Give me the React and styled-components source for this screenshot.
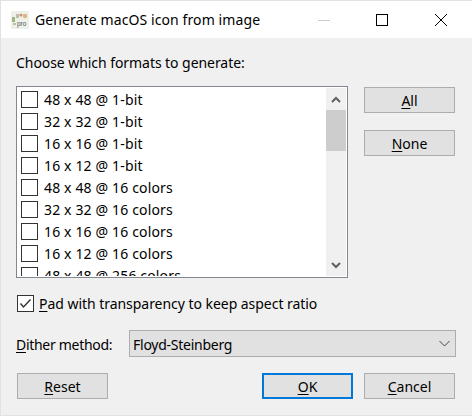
import React from "react";
import styled, { createGlobalStyle } from "styled-components";

const Global = createGlobalStyle`
  html, body { margin: 0; padding: 0; background: #f0f0f0; }
  body { font-family: "Noto Sans", "Open Sans", sans-serif; }
  u { text-underline-offset: 2px; text-decoration-thickness: 1px; }
`;

const Win = styled.div`
  box-sizing: border-box;
  width: 472px;
  height: 416px;
  border: 1px solid #e2e2e2;
  border-right: 0;
  background: #f0f0f0;
  display: flex;
  flex-direction: column;
  color: #000;
  font-size: 14px;
  overflow: hidden;
`;

const TitleBar = styled.div`
  height: 37px;
  background: #fff;
  display: flex;
  align-items: center;
  padding: 0 2px 0 10px;
  gap: 6px;
`;

const TitleText = styled.div`
  flex: 1;
  font-size: 14px;
  letter-spacing: 0.1px;
  white-space: nowrap;
`;

const WinButtons = styled.div`
  display: flex;
`;

const WinBtn = styled.div`
  width: ${(p) => p.$w}px;
  height: 37px;
  display: flex;
  align-items: center;
  justify-content: center;
`;

const Content = styled.div`
  flex: 1;
  display: flex;
  flex-direction: column;
  padding: 14px 16px 0 15px;
`;

const Heading = styled.div`
  box-sizing: border-box;
  height: 20px;
  line-height: 20px;
  margin-bottom: 14px;
  padding-top: 1px;
  letter-spacing: -0.06px;
`;

const ListRow = styled.div`
  display: flex;
  gap: 16px;
  height: 192px;
`;

const ListBox = styled.div`
  box-sizing: border-box;
  width: 332px;
  height: 192px;
  border: 1px solid #828790;
  background: #fff;
  display: flex;
  overflow: hidden;
  padding: 1px;
`;

const Items = styled.div`
  flex: 1;
  height: 188px;
  overflow: hidden;
  padding-left: 3px;
`;

const Item = styled.div`
  height: 22px;
  display: flex;
  align-items: center;
  gap: 6px;
  white-space: nowrap;
  letter-spacing: 0.15px;
`;

const Check = styled.div`
  box-sizing: border-box;
  width: 17px;
  height: 17px;
  border: 1px solid #333;
  background: #fff;
  display: flex;
  align-items: center;
  justify-content: center;
  flex: none;
`;

const Scroll = styled.div`
  width: 20px;
  height: 188px;
  background: #f0f0f0;
  display: flex;
  flex-direction: column;
`;

const Arrow = styled.div`
  height: 22px;
  display: flex;
  align-items: center;
  justify-content: center;
  flex: none;
`;

const Track = styled.div`
  flex: 1;
`;

const Thumb = styled.div`
  height: 41px;
  background: #cdcdcd;
`;

const Side = styled.div`
  display: flex;
  flex-direction: column;
  gap: 17px;
  padding-top: 1px;
`;

const Button = styled.div`
  box-sizing: border-box;
  width: 91px;
  height: 26px;
  display: flex;
  align-items: center;
  justify-content: center;
  background: #e1e1e1;
  border: ${(p) => (p.$primary ? "2px solid #0078d7" : "1px solid #adadad")};
  white-space: nowrap;
`;

const PadRow = styled.div`
  display: flex;
  align-items: center;
  gap: 5px;
  margin: 16px 0 0 1px;
  height: 19px;
  letter-spacing: -0.04px;
`;

const DitherRow = styled.div`
  display: flex;
  align-items: center;
  margin-top: 17px;
  height: 27px;
`;

const DitherLabel = styled.div`
  width: 113px;
  flex: none;
  padding-top: 1px;
  letter-spacing: -0.3px;
`;

const Combo = styled.div`
  box-sizing: border-box;
  width: 327px;
  height: 27px;
  background: #e1e1e1;
  border: 1px solid #adadad;
  display: flex;
  align-items: center;
  justify-content: space-between;
  padding: 0 5px 0 3px;
`;

const ComboText = styled.span`
  padding-top: 1px;
  letter-spacing: -0.25px;
`;

const Footer = styled.div`
  display: flex;
  align-items: center;
  margin: 16px 1px 0 1px;
`;

const FooterRight = styled.div`
  margin-left: auto;
  display: flex;
  gap: 11px;
`;

const labels = [
  "48 x 48 @ 1-bit",
  "32 x 32 @ 1-bit",
  "16 x 16 @ 1-bit",
  "16 x 12 @ 1-bit",
  "48 x 48 @ 16 colors",
  "32 x 32 @ 16 colors",
  "16 x 16 @ 16 colors",
  "16 x 12 @ 16 colors",
  "48 x 48 @ 256 colors",
];

const AppIcon = () => (
  <svg width="18" height="18" viewBox="0 0 18 18">
    <rect x="0" y="0" width="18" height="18" fill="#eef0ea" />
    <rect x="1" y="6" width="3" height="5" fill="#9db884" />
    <rect x="5" y="3" width="3" height="4" fill="#c5bba4" />
    <circle cx="10" cy="4" r="1.6" fill="#c8958a" />
    <circle cx="14" cy="5" r="2.2" fill="#e0b67c" />
    <rect x="2" y="12" width="3" height="2" fill="#b5c6a2" />
    <text x="6" y="15" fontFamily="Liberation Sans, sans-serif" fontSize="6.5" fill="#555">pro</text>
  </svg>
);

export default function App() {
  return (
    <Win>
      <Global />
      <TitleBar>
        <AppIcon />
        <TitleText>Generate macOS icon from image</TitleText>
        <WinButtons>
          <WinBtn $w={56}>
            <svg width="12" height="12" viewBox="0 0 12 12"><path d="M0 6.5H12" stroke="#ccc" strokeWidth="1" /></svg>
          </WinBtn>
          <WinBtn $w={60}>
            <svg width="12" height="12" viewBox="0 0 12 12"><rect x=".5" y=".5" width="11" height="11" fill="none" stroke="#000" /></svg>
          </WinBtn>
          <WinBtn $w={58}>
            <svg width="12" height="12" viewBox="0 0 12 12"><path d="M0 0L12 12M12 0L0 12" stroke="#000" strokeWidth="1" /></svg>
          </WinBtn>
        </WinButtons>
      </TitleBar>
      <Content>
        <Heading>Choose which formats to generate:</Heading>
        <ListRow>
          <ListBox>
            <Items>
              {labels.map((l) => (
                <Item key={l}><Check />{l}</Item>
              ))}
            </Items>
            <Scroll>
              <Arrow>
                <svg width="10" height="7" viewBox="0 0 10 7"><path d="M1 6L5 2L9 6" fill="none" stroke="#606060" strokeWidth="2" /></svg>
              </Arrow>
              <Thumb />
              <Track />
              <Arrow>
                <svg width="10" height="7" viewBox="0 0 10 7"><path d="M1 1L5 5L9 1" fill="none" stroke="#606060" strokeWidth="2" /></svg>
              </Arrow>
            </Scroll>
          </ListBox>
          <Side>
            <Button><span><u>A</u>ll</span></Button>
            <Button><span><u>N</u>one</span></Button>
          </Side>
        </ListRow>
        <PadRow>
          <Check>
            <svg width="13" height="11" viewBox="0 0 13 11"><path d="M1.5 5.5L4.5 9L11.5 1.5" fill="none" stroke="#333" strokeWidth="1.4" /></svg>
          </Check>
          <span><u>P</u>ad with transparency to keep aspect ratio</span>
        </PadRow>
        <DitherRow>
          <DitherLabel><u>D</u>ither method:</DitherLabel>
          <Combo>
            <ComboText>Floyd-Steinberg</ComboText>
            <svg width="11" height="7" viewBox="0 0 11 7"><path d="M.5 1L5.5 6L10.5 1" fill="none" stroke="#444" strokeWidth="1" /></svg>
          </Combo>
        </DitherRow>
        <Footer>
          <Button><span><u>R</u>eset</span></Button>
          <FooterRight>
            <Button $primary><span><u>O</u>K</span></Button>
            <Button><span><u>C</u>ancel</span></Button>
          </FooterRight>
        </Footer>
      </Content>
    </Win>
  );
}
